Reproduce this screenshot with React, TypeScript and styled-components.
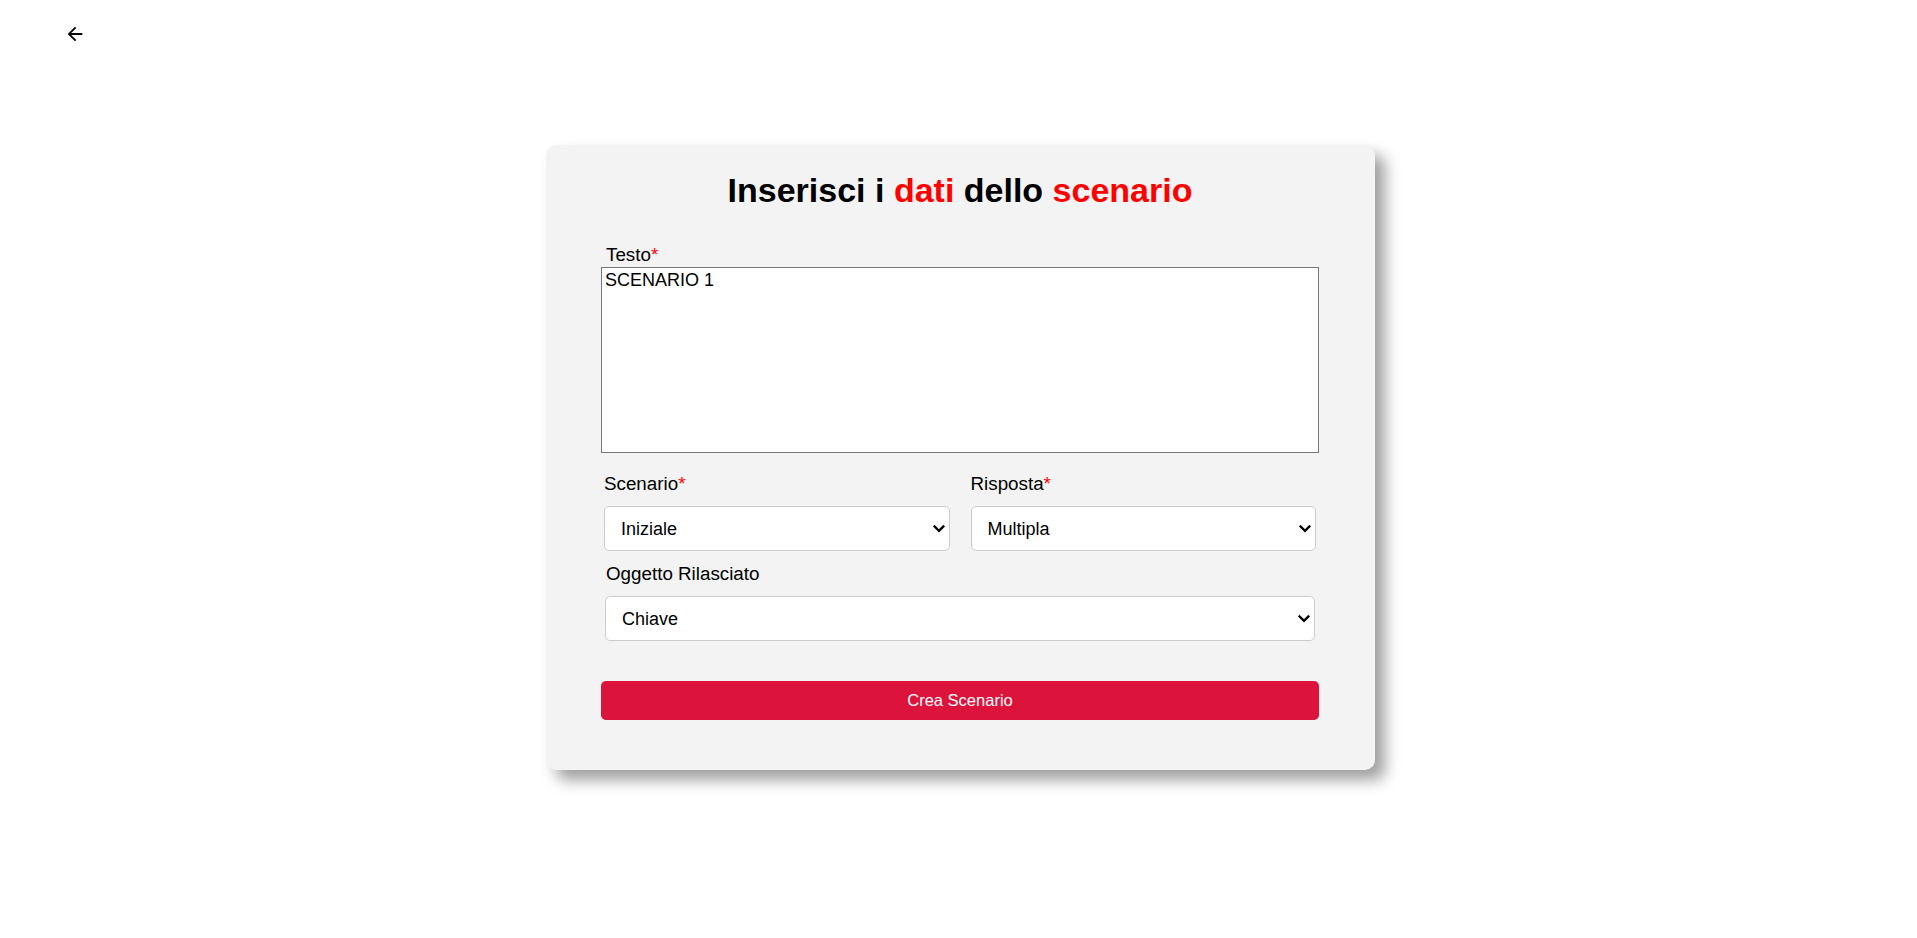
import React from "react";
import styled, { createGlobalStyle } from "styled-components";

const GlobalStyle = createGlobalStyle`
  html, body {
    margin: 0;
    padding: 0;
    background: #ffffff;
    font-family: "Liberation Sans", Arial, sans-serif;
    color: #000;
  }
  * { box-sizing: border-box; }
`;

const Page = styled.div`
  display: flex;
  flex-direction: column;
  min-height: 938px;
`;

const TopBar = styled.div`
  display: flex;
  align-items: flex-start;
  height: 145px;
  padding: 23px 0 0 64px;
`;

const BackButton = styled.button`
  display: flex;
  align-items: center;
  justify-content: center;
  width: 22px;
  height: 22px;
  padding: 0;
  border: none;
  background: transparent;
  cursor: pointer;
  color: #000;
`;

const Main = styled.main`
  display: flex;
  justify-content: center;
  padding-left: 4px;
`;

const Card = styled.section`
  width: 829px;
  background: #f3f3f3;
  border-radius: 10px;
  box-shadow: 10px 10px 15px rgba(0, 0, 0, 0.38);
  padding: 26px 56px 50px 55px;
  display: flex;
  flex-direction: column;
`;

const Title = styled.h1`
  margin: 0;
  font-size: 34px;
  line-height: 39px;
  font-weight: 700;
  text-align: center;
  color: #000;
`;

const Accent = styled.span`
  color: #ff0000;
`;

const Form = styled.form`
  display: flex;
  flex-direction: column;
  margin-top: 34px;
`;

const Field = styled.div<{ $inset?: number; $gap?: number }>`
  display: flex;
  flex-direction: column;
  gap: ${(p) => p.$gap ?? 0}px;
  margin: 0 ${(p) => p.$inset ?? 0}px;
  min-width: 0;
  flex: 1;
`;

const Label = styled.label<{ $indent?: number }>`
  display: block;
  font-size: 18.8px;
  line-height: 21px;
  padding-left: ${(p) => p.$indent ?? 0}px;
  color: #000;
`;

const Req = styled.span`
  color: #ff0000;
`;

const TextArea = styled.textarea`
  display: block;
  width: 100%;
  height: 186px;
  margin: 0;
  padding: 2px 3px;
  border: 1px solid #767676;
  border-radius: 0;
  background: #fff;
  font-family: "Liberation Sans", Arial, sans-serif;
  font-size: 18px;
  line-height: 21px;
  color: #000;
  resize: none;
`;

const Row = styled.div<{ $top: number }>`
  display: flex;
  gap: 21px;
  margin: ${(p) => p.$top}px 3px 0 3px;
`;

const SelectWrap = styled.div`
  position: relative;
  width: 100%;
`;

const Select = styled.select`
  display: block;
  width: 100%;
  height: 45px;
  margin: 0;
  padding: 0 30px 0 16px;
  border: 1px solid #cccccc;
  border-radius: 5px;
  background-color: #ffffff;
  font-family: "Liberation Sans", Arial, sans-serif;
  font-size: 18px;
  color: #000;
  appearance: none;
  -webkit-appearance: none;
`;

const Chevron = styled.svg`
  position: absolute;
  right: 5px;
  top: 50%;
  width: 12px;
  height: 9px;
  transform: translateY(-50%);
  pointer-events: none;
`;

const Block = styled.div<{ $top: number }>`
  margin-top: ${(p) => p.$top}px;
  display: flex;
`;

const SubmitButton = styled.button`
  margin-top: 40px;
  height: 39px;
  width: 100%;
  border: none;
  border-radius: 5px;
  background: #dc143c;
  color: #ffffff;
  font-family: "Liberation Sans", Arial, sans-serif;
  font-size: 16.5px;
  cursor: pointer;
`;

const ArrowBackIcon = () => (
  <svg width="22" height="22" viewBox="0 0 24 24" aria-hidden="true">
    <path
      fill="currentColor"
      d="M20 11H7.83l5.59-5.59L12 4l-8 8 8 8 1.41-1.41L7.83 13H20v-2z"
    />
  </svg>
);

const DropdownSelect = ({
  value,
  options,
}: {
  value: string;
  options: string[];
}) => (
  <SelectWrap>
    <Select defaultValue={value}>
      {options.map((o) => (
        <option key={o}>{o}</option>
      ))}
    </Select>
    <Chevron viewBox="0 0 12 9" aria-hidden="true">
      <polyline
        points="1.6,2 6,6.4 10.4,2"
        fill="none"
        stroke="#000"
        strokeWidth="2.4"
        strokeLinecap="square"
      />
    </Chevron>
  </SelectWrap>
);

export default function App() {
  return (
    <>
      <GlobalStyle />
      <Page>
        <TopBar>
          <BackButton type="button" aria-label="Indietro">
            <ArrowBackIcon />
          </BackButton>
        </TopBar>
        <Main>
          <Card>
            <Title>
              Inserisci i <Accent>dati</Accent> dello <Accent>scenario</Accent>
            </Title>
            <Form onSubmit={(e) => e.preventDefault()}>
              <Field $gap={2}>
                <Label $indent={5}>
                  Testo<Req>*</Req>
                </Label>
                <TextArea defaultValue="SCENARIO 1" />
              </Field>
              <Row $top={20}>
                <Field $gap={12}>
                  <Label>
                    Scenario<Req>*</Req>
                  </Label>
                  <DropdownSelect
                    value="Iniziale"
                    options={["Iniziale", "Intermedio", "Finale"]}
                  />
                </Field>
                <Field $gap={12}>
                  <Label>
                    Risposta<Req>*</Req>
                  </Label>
                  <DropdownSelect
                    value="Multipla"
                    options={["Multipla", "Singola", "Aperta"]}
                  />
                </Field>
              </Row>
              <Block $top={12}>
                <Field $inset={4} $gap={12}>
                  <Label $indent={1}>Oggetto Rilasciato</Label>
                  <DropdownSelect value="Chiave" options={["Chiave", "Nessuno"]} />
                </Field>
              </Block>
              <SubmitButton type="submit">Crea Scenario</SubmitButton>
            </Form>
          </Card>
        </Main>
      </Page>
    </>
  );
}
